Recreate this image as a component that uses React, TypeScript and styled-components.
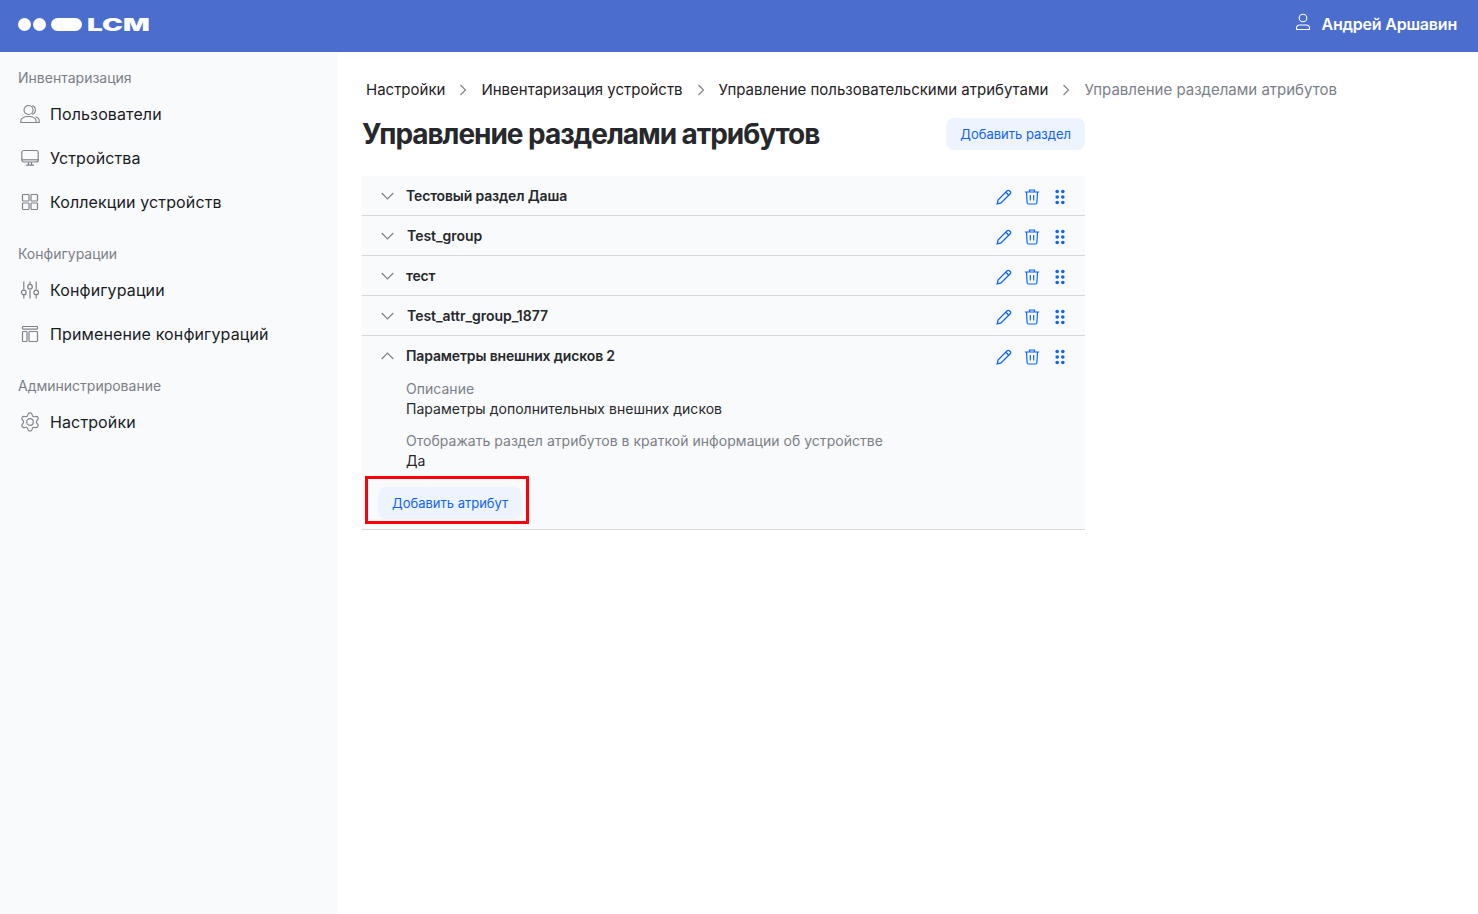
import React from "react";
import styled, { createGlobalStyle } from "styled-components";

const GlobalStyle = createGlobalStyle`
  html, body {
    margin: 0;
    padding: 0;
    background: #ffffff;
    font-family: "Inter", "Noto Sans", sans-serif;
    color: #1f2124;
  }
  * { box-sizing: border-box; }
`;

const Page = styled.div`
  width: 100%;
  height: 914px;
  display: flex;
  flex-direction: column;
  overflow: hidden;
`;

const TopBar = styled.header`
  height: 52px;
  flex: none;
  background: #4a6dce;
  display: flex;
  align-items: center;
  justify-content: space-between;
  padding: 0 21px 4px 18px;
`;

const Logo = styled.div`
  display: flex;
  align-items: center;
  gap: 1.5px;
`;

const LogoDot = styled.span`
  width: 13px;
  height: 13px;
  border-radius: 50%;
  background: #fff;
`;

const LogoPill = styled.span`
  width: 31px;
  height: 13px;
  border-radius: 7px;
  background: #fff;
  margin-left: 3.5px;
`;

const LogoText = styled.span`
  display: inline-block;
  margin-left: 4px;
  width: 62px;
  color: #fff;
  font-weight: 900;
  font-size: 17.5px;
  line-height: 13px;
  transform: scaleX(1.6);
  transform-origin: left center;
`;

const UserBox = styled.div`
  display: flex;
  align-items: center;
  gap: 10px;
  color: #fff;
  font-size: 16px;
  font-weight: 600;
  line-height: 20px;
  letter-spacing: -0.2px;
  svg { margin-top: -4px; }
`;

const Body = styled.div`
  flex: 1;
  display: flex;
  min-height: 0;
`;

const Sidebar = styled.nav`
  width: 338px;
  flex: none;
  background: #f9fafc;
  padding: 16px 18px 0;
`;

const NavGroup = styled.div`
  margin-bottom: 20px;
`;

const GroupTitle = styled.div`
  font-size: 14px;
  line-height: 20px;
  color: #7b7f87;
  margin-bottom: 4px;
`;

const NavItem = styled.div`
  height: 44px;
  display: flex;
  align-items: center;
  gap: 10px;
  padding-left: 2px;
  font-size: 16px;
  letter-spacing: 0.12px;
  color: #1a1c1f;
  svg { flex: none; color: #7f838a; }
`;

const Main = styled.main`
  flex: 1;
  padding: 28px 0 0 24px;
`;

const Crumbs = styled.div`
  display: flex;
  align-items: center;
  height: 20px;
  padding-left: 4px;
  font-size: 15px;
  line-height: 20px;
`;

const Crumb = styled.span<{ $current?: boolean }>`
  color: ${(p) => (p.$current ? "#7b7f87" : "#1f2124")};
`;

const CrumbArrow = styled.span`
  display: flex;
  width: 36px;
  justify-content: center;
  color: #7f838a;
`;

const Content = styled.div`
  width: 723px;
`;

const TitleRow = styled.div`
  display: flex;
  align-items: center;
  justify-content: space-between;
  margin-top: 18px;
  height: 32px;
`;

const Title = styled.h1`
  margin: 0;
  font-size: 28px;
  line-height: 32px;
  font-weight: 700;
  letter-spacing: -1.05px;
  color: #26282b;
`;

const SoftButton = styled.button`
  height: 32px;
  border: 0;
  border-radius: 8px;
  padding: 0 14px;
  background: #edf4fe;
  color: #0f62fe;
  font-family: inherit;
  font-size: 13px;
  line-height: 20px;
  white-space: nowrap;
`;

const Accordion = styled.div`
  margin-top: 26px;
`;

const Section = styled.section`
  background: #f9fafc;
  border-bottom: 1px solid #d6d8db;
`;

const SectionHead = styled.div`
  height: 39px;
  display: flex;
  align-items: center;
  padding: 1px 15px 0 19px;
`;

const Chevron = styled.span`
  display: flex;
  width: 25px;
  flex: none;
  color: #7f838a;
`;

const SectionName = styled.div<{ $latin?: boolean }>`
  flex: 1;
  font-size: 14px;
  line-height: 20px;
  font-weight: 600;
  letter-spacing: ${(p) => (p.$latin ? "-0.02px" : "-0.15px")};
  padding-left: ${(p) => (p.$latin ? "1px" : "0")};
  color: #26282b;
`;

const Actions = styled.div`
  display: flex;
  align-items: center;
  gap: 8px;
  margin-top: 1px;
  color: #0f62fe;
`;

const SectionBody = styled.div`
  padding: 4px 0 5px 44px;
`;

const Field = styled.div`
  margin-bottom: 12px;
  font-size: 14px;
  line-height: 20px;
  letter-spacing: 0.03px;
`;

const FieldLabel = styled.div`
  color: #7b7f87;
`;

const FieldValue = styled.div`
  color: #26282b;
`;

const Highlight = styled.div`
  width: 164px;
  height: 48px;
  margin-left: -41px;
  margin-top: -7px;
  border: 3px solid #fb0007;
  display: flex;
  align-items: flex-start;
  padding: 8px 0 0 10px;
`;

const UserIcon = () => (
  <svg width="16" height="18" viewBox="0 0 16 18" fill="none" stroke="currentColor" strokeWidth="1.1">
    <circle cx="8" cy="5" r="3.8" />
    <path d="M1.5 16.5v-1.2c0-1.8 1.5-3.3 3.3-3.3h6.4c1.8 0 3.3 1.5 3.3 3.3v1.2z" />
  </svg>
);

const UsersIcon = () => (
  <svg width="20" height="20" viewBox="0 0 20 20" fill="none" stroke="currentColor" strokeWidth="1.1">
    <circle cx="8.5" cy="6" r="4.5" />
    <path d="M12 1.7c2 .4 3.4 2.2 3.4 4.3s-1.400 3.800-3.400 4.300" />
    <path d="M.8 18.500v-1c0-2.800 2.700-5 7.700-5s7.700 2.200 7.700 5v1z" />
    <path d="M15.500 12.800c2.200.6 3.800 2.300 3.800 4.500v1.200h-3" />
  </svg>
);

const MonitorIcon = () => (
  <svg width="20" height="20" viewBox="0 0 20 20" fill="none" stroke="currentColor" strokeWidth="1.2">
    <rect x="1.800" y="2.500" width="16.400" height="11.500" rx="2" />
    <path d="M1.800 11.800h16.400" />
    <path d="M8.500 14v3M11.500 14v3M6 17.200h8" />
  </svg>
);

const GridIcon = () => (
  <svg width="20" height="20" viewBox="0 0 20 20" fill="none" stroke="currentColor" strokeWidth="1.2">
    <rect x="2.500" y="2.500" width="6.500" height="6.500" rx="0.800" />
    <rect x="11" y="2.500" width="6.500" height="6.500" rx="0.800" />
    <rect x="2.500" y="11" width="6.500" height="6.500" rx="0.800" />
    <rect x="11" y="11" width="6.500" height="6.500" rx="0.800" />
  </svg>
);

const SlidersIcon = () => (
  <svg width="20" height="20" viewBox="0 0 20 20" fill="none" stroke="currentColor" strokeWidth="1.2">
    <path d="M3.800 1.500v8M3.800 15v3.500M10 1.500v2.500M10 9.500v9M16.200 1.500v8M16.200 15v3.500" />
    <circle cx="3.800" cy="12.400" r="2.300" />
    <circle cx="10" cy="6.700" r="2.300" />
    <circle cx="16.200" cy="12.400" r="2.300" />
  </svg>
);

const LayoutIcon = () => (
  <svg width="20" height="20" viewBox="0 0 20 20" fill="none" stroke="currentColor" strokeWidth="1.2">
    <rect x="2.500" y="2.500" width="15" height="2.600" rx="0.500" />
    <rect x="2.500" y="7.500" width="4.500" height="10" rx="0.800" />
    <rect x="9" y="7.500" width="8.500" height="10" rx="0.800" />
  </svg>
);

const GearIcon = () => (
  <svg width="20" height="20" viewBox="1.100 1.100 21.800 21.800" fill="none" stroke="currentColor" strokeWidth="1.300">
    <path d="M9.671 4.136a2.340 2.340 0 0 1 4.659 0 2.340 2.340 0 0 0 3.319 1.915 2.340 2.340 0 0 1 2.330 4.033 2.340 2.340 0 0 0 0 3.831 2.340 2.340 0 0 1-2.330 4.033 2.340 2.340 0 0 0-3.319 1.915 2.340 2.340 0 0 1-4.659 0 2.340 2.340 0 0 0-3.320-1.915 2.340 2.340 0 0 1-2.330-4.033 2.340 2.340 0 0 0 0-3.831A2.340 2.340 0 0 1 6.350 6.051a2.340 2.340 0 0 0 3.319-1.915" />
    <circle cx="12" cy="12" r="3.600" />
  </svg>
);

const ArrowRight = () => (
  <svg width="8" height="12" viewBox="0 0 8 12" fill="none" stroke="currentColor" strokeWidth="1.200">
    <path d="M1.500 1l5 5-5 5" />
  </svg>
);

const ChevronIcon = ({ up }: { up?: boolean }) => (
  <svg width="13" height="8" viewBox="0 0 13 8" fill="none" stroke="currentColor" strokeWidth="1.200">
    <path d={up ? "M.7 7l5.800-6 5.800 6" : "M.7 1l5.800 6 5.800-6"} />
  </svg>
);

const PencilIcon = () => (
  <svg width="20" height="20" viewBox="-2 -2 20 20" fill="none" stroke="currentColor" strokeWidth="1.300">
    <path d="M1.200 14.800l.8-3.800L11.200 1.800a1.600 1.600 0 0 1 2.300 0l.7.700a1.600 1.600 0 0 1 0 2.300L5 14z" />
    <path d="M9.800 3.200l3 3" />
  </svg>
);

const TrashIcon = () => (
  <svg width="20" height="20" viewBox="-2 -2 20 20" fill="none" stroke="currentColor" strokeWidth="1.200">
    <path d="M.8 3h14.400M5.500 3V1h5v2" />
    <path d="M2.500 3l.6 10.500c0 .9.700 1.500 1.500 1.500h6.800c.8 0 1.500-.6 1.500-1.500L13.500 3" />
    <path d="M6.300 6v5.500M9.700 6v5.500" />
  </svg>
);

const DragIcon = () => (
  <svg width="20" height="20" viewBox="0 0 20 20" fill="currentColor">
    <circle cx="7.200" cy="4.500" r="1.800" />
    <circle cx="12.800" cy="4.500" r="1.800" />
    <circle cx="7.200" cy="10" r="1.800" />
    <circle cx="12.800" cy="10" r="1.800" />
    <circle cx="7.200" cy="15.500" r="1.800" />
    <circle cx="12.800" cy="15.500" r="1.800" />
  </svg>
);

const navGroups = [
  {
    title: "Инвентаризация",
    items: [
      { label: "Пользователи", icon: <UsersIcon /> },
      { label: "Устройства", icon: <MonitorIcon /> },
      { label: "Коллекции устройств", icon: <GridIcon /> },
    ],
  },
  {
    title: "Конфигурации",
    items: [
      { label: "Конфигурации", icon: <SlidersIcon /> },
      { label: "Применение конфигураций", icon: <LayoutIcon /> },
    ],
  },
  {
    title: "Администрирование",
    items: [{ label: "Настройки", icon: <GearIcon /> }],
  },
];

const crumbs = [
  "Настройки",
  "Инвентаризация устройств",
  "Управление пользовательскими атрибутами",
];

const collapsed = [
  { name: "Тестовый раздел Даша" },
  { name: "Test_group", latin: true },
  { name: "тест" },
  { name: "Test_attr_group_1877", latin: true },
];

const RowActions = () => (
  <Actions>
    <PencilIcon />
    <TrashIcon />
    <DragIcon />
  </Actions>
);

export default function App() {
  return (
    <Page>
      <GlobalStyle />
      <TopBar>
        <Logo>
          <LogoDot />
          <LogoDot />
          <LogoPill />
          <LogoText>LCM</LogoText>
        </Logo>
        <UserBox>
          <UserIcon />
          Андрей Аршавин
        </UserBox>
      </TopBar>
      <Body>
        <Sidebar>
          {navGroups.map((group) => (
            <NavGroup key={group.title}>
              <GroupTitle>{group.title}</GroupTitle>
              {group.items.map((item) => (
                <NavItem key={item.label}>
                  {item.icon}
                  {item.label}
                </NavItem>
              ))}
            </NavGroup>
          ))}
        </Sidebar>
        <Main>
          <Crumbs>
            {crumbs.map((c) => (
              <React.Fragment key={c}>
                <Crumb>{c}</Crumb>
                <CrumbArrow>
                  <ArrowRight />
                </CrumbArrow>
              </React.Fragment>
            ))}
            <Crumb $current>Управление разделами атрибутов</Crumb>
          </Crumbs>
          <Content>
            <TitleRow>
              <Title>Управление разделами атрибутов</Title>
              <SoftButton>Добавить раздел</SoftButton>
            </TitleRow>
            <Accordion>
              {collapsed.map((row) => (
                <Section key={row.name}>
                  <SectionHead>
                    <Chevron>
                      <ChevronIcon />
                    </Chevron>
                    <SectionName $latin={row.latin}>{row.name}</SectionName>
                    <RowActions />
                  </SectionHead>
                </Section>
              ))}
              <Section>
                <SectionHead>
                  <Chevron>
                    <ChevronIcon up />
                  </Chevron>
                  <SectionName>Параметры внешних дисков 2</SectionName>
                  <RowActions />
                </SectionHead>
                <SectionBody>
                  <Field>
                    <FieldLabel>Описание</FieldLabel>
                    <FieldValue>Параметры дополнительных внешних дисков</FieldValue>
                  </Field>
                  <Field>
                    <FieldLabel>Отображать раздел атрибутов в краткой информации об устройстве</FieldLabel>
                    <FieldValue>Да</FieldValue>
                  </Field>
                  <Highlight>
                    <SoftButton>Добавить атрибут</SoftButton>
                  </Highlight>
                </SectionBody>
              </Section>
            </Accordion>
          </Content>
        </Main>
      </Body>
    </Page>
  );
}
